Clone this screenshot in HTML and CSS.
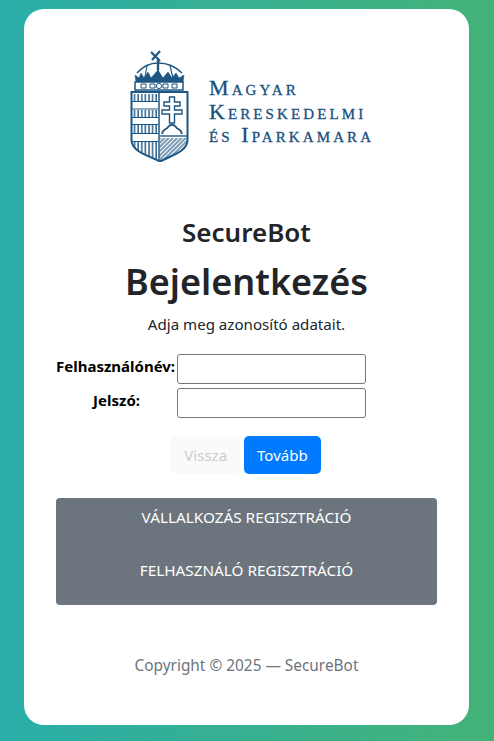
FILE: index.html
```html
<!DOCTYPE html>
<html lang="hu">

<head>
    <meta charset="UTF-8">
    <meta name="viewport" content="width=device-width, initial-scale=1.0">
    <title>SecureBot</title>
    <link rel="stylesheet" href="styles.css">
</head>

<body>
    <div class="card">
        <!-- Logo -->
        <div class="logo">
            <svg class="crest" width="60" height="114" viewBox="0 0 60 114" fill="none" stroke="#1d5682">
                <defs>
                    <pattern id="bars" width="3.6" height="4" patternUnits="userSpaceOnUse">
                        <path d="M1 0 V4" stroke="#1d5682" stroke-width="1.4"/>
                    </pattern>
                    <pattern id="hatch" width="3" height="3" patternUnits="userSpaceOnUse" patternTransform="rotate(45)">
                        <path d="M1 0 V3" stroke="#1d5682" stroke-width="1.2"/>
                    </pattern>
                    <clipPath id="shield-clip">
                        <path d="M2 45 H57 V92 C57 104 40 108 30 113 C20 108 2 104 2 92 Z"/>
                    </clipPath>
                </defs>
                <!-- cross on top of the crown -->
                <path d="M21 4 L30 13 M30 3 L22 12" stroke-width="2.2"/>
                <path d="M28 12 V22" stroke-width="2.4"/>
                <!-- crown -->
                <path d="M7 25 C14 17 22 15 28 15 C36 15 45 18 52 25" stroke-width="1.5"/>
                <path d="M28 15 V34 M17 18 L14 34 M40 18 L44 34" stroke-width="1.1"/>
                <path d="M6 34 L5 27 L9 30 L11 25 L14 30 L18 24 L21 30 L28 22 L33 30 L38 24 L42 30 L46 25 L49 30 L54 27 L53 34 Z" fill="#1d5682" stroke-width="0.6"/>
                <rect x="5" y="34" width="48" height="8" fill="#fff" stroke-width="1.5"/>
                <path d="M11 36 H16 V40 H11 Z M20 36 H25 V40 H20 Z M33 36 H38 V40 H33 Z M42 36 H47 V40 H42 Z" stroke-width="1"/>
                <circle cx="29" cy="38" r="2.6" stroke-width="1"/>
                <!-- shield -->
                <path d="M1.5 44 H57.5 V92 C57.5 104 40 108 30 113.5 C20 108 1.5 104 1.5 92 Z" fill="#fff" stroke-width="2"/>
                <g clip-path="url(#shield-clip)">
                    <rect x="3" y="46" width="25" height="7" fill="url(#bars)" stroke="none"/>
                    <rect x="3" y="62" width="25" height="7" fill="url(#bars)" stroke="none"/>
                    <rect x="3" y="77" width="25" height="8" fill="url(#bars)" stroke="none"/>
                    <rect x="3" y="94" width="25" height="18" fill="url(#bars)" stroke="none"/>
                    <path d="M2 53.5 H28 M2 61 H28 M2 69.5 H28 M2 76.5 H28 M2 85.5 H28 M2 93.5 H28" stroke-width="1"/>
                    <rect x="30" y="90" width="28" height="24" fill="url(#hatch)" stroke="none"/>
                </g>
                <path d="M29 44 V112" stroke-width="1.5"/>
                <!-- double cross on the hill -->
                <path d="M39.5 49 H44.5 V54 H50 V58 H44.5 V62 H52 V66 H44.5 V75 H39.5 V66 H32 V62 H39.5 V58 H34 V54 H39.5 Z" stroke-width="1.4"/>
                <path d="M32 86 C33 80 37 82 38 79 C40 76 44 76 46 79 C47 82 51 80 52 86" stroke-width="1.8"/>
                <path d="M30 88 H57" stroke-width="1.4"/>
            </svg>
            <div class="logo-text">
                <div>Magyar</div>
                <div>Kereskedelmi</div>
                <div>és Iparkamara</div>
            </div>
        </div>

        <h2 class="app-name">SecureBot</h2>
        <h1 class="title">Bejelentkezés</h1>
        <p class="hint">Adja meg azonosító adatait.</p>

        <form class="login-form">
            <div class="row">
                <label for="user">Felhasználónév:</label>
                <input type="text" id="user">
            </div>
            <div class="row">
                <label for="pass" class="short">Jelszó:</label>
                <input type="password" id="pass">
            </div>
            <div class="buttons">
                <button type="button" class="btn btn-back" disabled>Vissza</button>
                <button type="submit" class="btn btn-next">Tovább</button>
            </div>
        </form>

        <div class="register">
            <a href="#">VÁLLALKOZÁS REGISZTRÁCIÓ</a>
            <a href="#">FELHASZNÁLÓ REGISZTRÁCIÓ</a>
        </div>

        <p class="copyright">Copyright © 2025 — SecureBot</p>
    </div>
</body>

</html>
```

FILE: styles.css
```css
html, body {
    height: 100%;
}

body {
    margin: 0;
    box-sizing: border-box;
    padding: 9px 25px 16px 24px;
    font-family: "Noto Sans", "Open Sans", sans-serif;
    color: #212529;
    background: linear-gradient(90deg, #2aaeaa, #44b277);
}

.card {
    box-sizing: border-box;
    height: 716px;
    padding: 39px 32px 0;
    background-color: #fff;
    border-radius: 20px;
    text-align: center;
}

.logo {
    display: flex;
    justify-content: center;
    gap: 19px;
    height: 114px;
    padding-left: 10px;
}

.logo-text {
    width: 164px;
    padding-top: 28px;
    font-family: "Liberation Serif", serif;
    font-variant: small-caps;
    font-size: 22px;
    line-height: 23.5px;
    letter-spacing: 3.1px;
    -webkit-text-stroke: 0.3px #174f7d;
    color: #174f7d;
    text-align: left;
    white-space: nowrap;
}

.app-name {
    margin: 52px 0 0;
    font-size: 26px;
    line-height: 36px;
    font-weight: 600;
}

.title {
    margin: 7px 0 0;
    font-size: 36px;
    line-height: 50px;
    font-weight: 600;
}

.hint {
    margin: 5px 0 0;
    font-size: 15.1px;
    line-height: 24px;
}

.login-form {
    margin-top: 18px;
}

.row {
    display: flex;
    align-items: flex-start;
    margin-bottom: 4px;
}

.row label {
    box-sizing: border-box;
    width: 121px;
    padding-right: 2px;
    font-size: 15px;
    line-height: 24px;
    font-weight: 700;
    color: #000;
    white-space: nowrap;
    text-align: right;
}

.row label.short {
    padding-right: 37px;
}

.row input {
    box-sizing: border-box;
    width: 189px;
    height: 30px;
    border: 1px solid #767676;
    border-radius: 3px;
    padding: 1px 2px;
}

.buttons {
    display: flex;
    justify-content: center;
    gap: 4px;
    margin-top: 18px;
    padding-right: 1px;
}

.btn {
    height: 38px;
    padding: 0 13px;
    border: none;
    border-radius: 5px;
    font-family: inherit;
    font-size: 15px;
}

.btn-back {
    background-color: #fafafa;
    color: #ccc;
}

.btn-next {
    background-color: #007bff;
    color: #fff;
}

.register {
    display: flex;
    flex-direction: column;
    gap: 29px;
    height: 107px;
    box-sizing: border-box;
    margin-top: 24px;
    padding-top: 7px;
    background-color: #6c757d;
    border-radius: 4px;
}

.register a {
    font-size: 15.3px;
    line-height: 24px;
    color: #fff;
    text-decoration: none;
}

.copyright {
    margin: 49px 0 0;
    font-size: 15.4px;
    line-height: 24px;
    color: #6c757d;
}
```
